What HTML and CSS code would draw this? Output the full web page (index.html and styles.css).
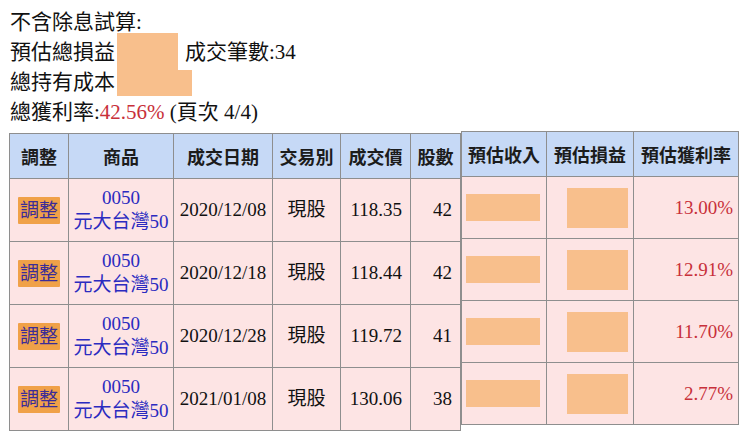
FILE: index.html
```html
<!DOCTYPE html>
<html>
<head>
<meta charset="utf-8">
<link rel="stylesheet" href="styles.css">
</head>
<body>
<div class="summary">
  <div class="line">不含除息試算:</div>
  <div class="line">預估總損益<span class="mask mask-a"></span><span class="after">成交筆數:34</span></div>
  <div class="line">總持有成本<span class="mask mask-b"></span></div>
  <div class="line">總獲利率:<span class="red">42.56%</span> (頁次 4/4)</div>
</div>
<div class="tables">
  <table class="tbl left">
    <colgroup><col class="c1"><col class="c2"><col class="c3"><col class="c4"><col class="c5"><col class="c6"></colgroup>
    <thead>
      <tr><th>調整</th><th>商品</th><th>成交日期</th><th>交易別</th><th>成交價</th><th>股數</th></tr>
    </thead>
    <tbody>
      <tr><td class="ctr"><span class="btn">調整</span></td><td class="ctr link">0050<br>元大台灣50</td><td class="ctr">2020/12/08</td><td class="ctr">現股</td><td class="num">118.35</td><td class="num">42</td></tr>
      <tr><td class="ctr"><span class="btn">調整</span></td><td class="ctr link">0050<br>元大台灣50</td><td class="ctr">2020/12/18</td><td class="ctr">現股</td><td class="num">118.44</td><td class="num">42</td></tr>
      <tr><td class="ctr"><span class="btn">調整</span></td><td class="ctr link">0050<br>元大台灣50</td><td class="ctr">2020/12/28</td><td class="ctr">現股</td><td class="num">119.72</td><td class="num">41</td></tr>
      <tr><td class="ctr"><span class="btn">調整</span></td><td class="ctr link">0050<br>元大台灣50</td><td class="ctr">2021/01/08</td><td class="ctr">現股</td><td class="num">130.06</td><td class="num">38</td></tr>
    </tbody>
  </table>
  <table class="tbl right">
    <colgroup><col class="c7"><col class="c8"><col class="c9"></colgroup>
    <thead>
      <tr><th>預估收入</th><th>預估損益</th><th>預估獲利率</th></tr>
    </thead>
    <tbody>
      <tr><td class="inc"><span class="mask mask-inc"></span></td><td class="pl"><span class="mask mask-pl"></span></td><td class="num red">13.00%</td></tr>
      <tr><td class="inc"><span class="mask mask-inc"></span></td><td class="pl"><span class="mask mask-pl"></span></td><td class="num red">12.91%</td></tr>
      <tr><td class="inc"><span class="mask mask-inc"></span></td><td class="pl"><span class="mask mask-pl"></span></td><td class="num red">11.70%</td></tr>
      <tr><td class="inc"><span class="mask mask-inc"></span></td><td class="pl"><span class="mask mask-pl"></span></td><td class="num red">2.77%</td></tr>
    </tbody>
  </table>
</div>
</body>
</html>
```

FILE: styles.css
```css
html, body {
  margin: 0;
  padding: 0;
  background: #ffffff;
}
body {
  font-family: "Liberation Serif", "Noto Sans CJK TC", serif;
  color: #111;
  overflow: hidden;
  width: 740px;
  height: 435px;
}
.summary {
  padding: 7px 0 0 10px;
  font-size: 21px;
}
.summary .line {
  height: 30px;
  line-height: 30px;
  white-space: nowrap;
}
.mask {
  display: inline-block;
  background: #f8bf8c;
  vertical-align: middle;
}
.mask-a {
  width: 61px;
  height: 42px;
  margin: -6px 0 -6px 2px;
}
.mask-b {
  width: 75px;
  height: 26px;
  margin: -4px 0 -2px 2px;
}
.after {
  margin-left: 7px;
}
.red {
  color: #c8303a;
}
.tables {
  display: flex;
  align-items: flex-start;
  margin-top: 4px;
  padding-left: 9px;
}
.tbl {
  border-collapse: collapse;
  table-layout: fixed;
}
.tbl.left {
  margin-top: 2px;
}
.tbl th, .tbl td {
  border: 1px solid #8e8e8e;
  padding: 0;
}
.tbl th {
  background: #c6d9f6;
  height: 44px;
  font-size: 18px;
  font-weight: bold;
  color: #1c1c1c;
  text-align: center;
  font-family: "Noto Sans CJK TC", sans-serif;
}
.tbl td {
  background: #fde4e4;
  height: 62px;
  font-size: 19px;
  line-height: 24px;
  color: #111;
}
.tbl.right td {
  height: 61px;
}
.c1 { width: 59px; }
.c2 { width: 105px; }
.c3 { width: 99px; }
.c4 { width: 68px; }
.c5 { width: 70px; }
.c6 { width: 50px; }
.c7 { width: 85px; }
.c8 { width: 87px; }
.c9 { width: 105px; }
.ctr {
  text-align: center;
}
.num {
  text-align: right;
  padding-right: 8px !important;
}
.tbl td.num.red {
  color: #c8303a;
  padding-right: 5px !important;
}
.link {
  color: #2b2bc0 !important;
}
.btn {
  display: inline-block;
  background: #f0a148;
  color: #3a2c98;
  font-size: 19px;
  line-height: 27px;
  padding: 0 2px;
  border-radius: 1px;
}
.inc {
  padding-left: 4px !important;
}
.mask-inc {
  width: 74px;
  height: 27px;
}
.pl {
  padding-left: 20px !important;
}
.mask-pl {
  width: 61px;
  height: 40px;
}
```
